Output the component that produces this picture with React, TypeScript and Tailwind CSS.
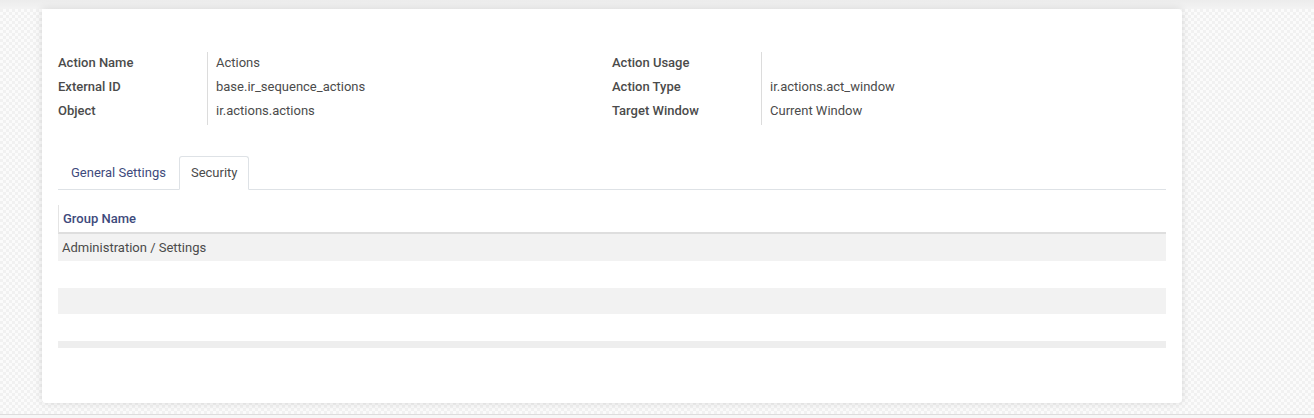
import React from "react";

const Row = ({ label, value }: { label: string; value: string }) => (
  <div className="flex h-6 items-center">
    <div className="w-[149px] font-medium text-[#4b4b4b]">{label}</div>
    <div className="pl-[9px] text-[#4b4b4b]">{value}</div>
  </div>
);

export default function App() {
  return (
    <div
      className="w-[1314px] h-[418px] overflow-hidden bg-[conic-gradient(#f1f1f1_25%,#fbfbfb_0_50%,#f1f1f1_0_75%,#fbfbfb_0)] bg-[length:6px_6px] text-[13px] flex flex-col"
      style={{ fontFamily: "Roboto, 'Noto Sans', sans-serif" }}
    >
      <div className="h-[9px] shrink-0 bg-gradient-to-b from-[#ececec] to-[#f3f3f3]" />
      <div className="ml-[42px] w-[1140px] h-[394px] shrink-0 bg-white rounded-b-[4px] rounded-tr-[4px] shadow-[0_0_8px_rgba(0,0,0,0.12)] px-4 pt-[41px]">
        <div className="grid grid-cols-[554px_1fr]">
          <div className="relative h-[78px] pt-px">
            <div className="absolute left-[149px] top-[2px] h-[73px] w-px bg-[#dcdcdc]" />
            <Row label="Action Name" value="Actions" />
            <Row label="External ID" value="base.ir_sequence_actions" />
            <Row label="Object" value="ir.actions.actions" />
          </div>
          <div className="relative h-[78px] pt-px">
            <div className="absolute left-[149px] top-[2px] h-[73px] w-px bg-[#dcdcdc]" />
            <Row label="Action Usage" value="" />
            <Row label="Action Type" value="ir.actions.act_window" />
            <Row label="Target Window" value="Current Window" />
          </div>
        </div>

        <div className="mt-[28px] flex border-b border-[#dee2e6] h-[34px]">
          <div className="px-[13px] flex items-center text-[#3e4a7c]">General Settings</div>
          <div className="px-[11px] flex items-center text-[#4b4b4b] border border-[#dee2e6] border-b-white -mb-px rounded-t-[3px] bg-white">
            Security
          </div>
        </div>

        <div className="mt-[15px]">
          <div className="h-[29px] flex items-center border-l border-[#e4e4e4] border-b-2 border-b-[#dedede] pl-[4px] font-medium text-[#3e4a7c]">
            Group Name
          </div>
          <div className="h-[27px] flex items-center bg-[#f2f2f2] pl-[4px] text-[#4b4b4b]">
            Administration / Settings
          </div>
          <div className="h-[27px]" />
          <div className="h-[26px] bg-[#f2f2f2]" />
          <div className="h-[27px]" />
          <div className="h-[7px] bg-[#eeeeee]" />
        </div>
      </div>
      <div className="mt-[11px] h-px bg-[#dddddd] shrink-0" />
      <div className="flex-1 bg-[#f7f7f7]" />
    </div>
  );
}
